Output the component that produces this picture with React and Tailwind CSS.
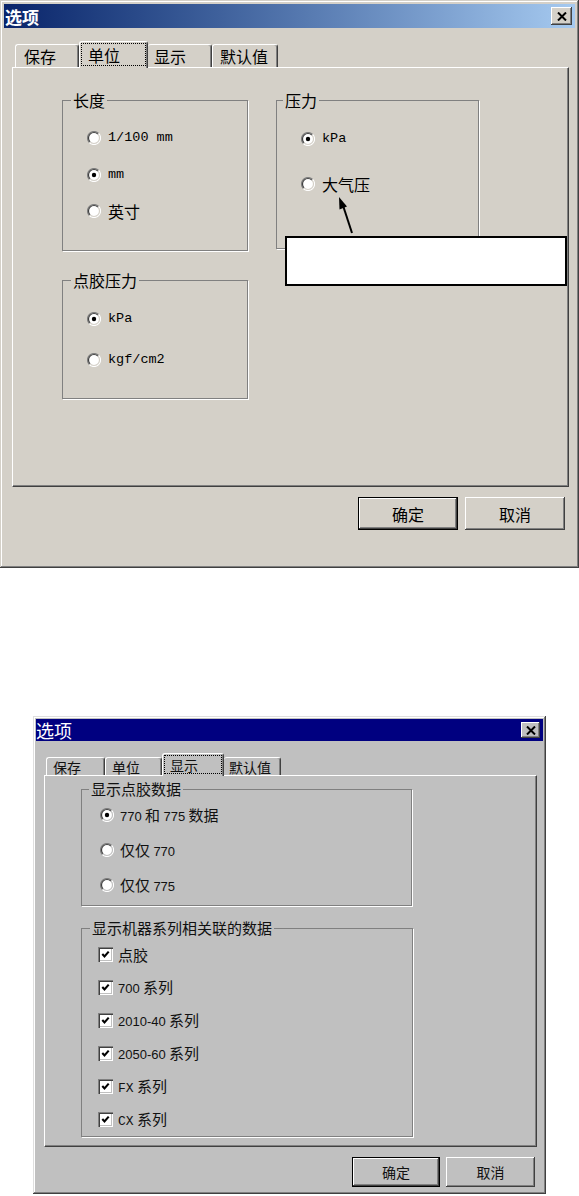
import React from 'react';

// Classic Windows option dialogs: "单位" tab (Win2000 look) and "显示" tab (Win95 look)

function Radio({ checked, face = '#d4d0c8' }) {
  return (
    <svg width="14" height="14" viewBox="0 0 14 14" className="shrink-0">
      <circle cx="7" cy="7" r="6" fill="#fff" />
      <path d="M2.4 11.6A6.5 6.5 0 0 1 11.6 2.4" fill="none" stroke="#808080" strokeWidth="1.2" />
      <path d="M11.6 2.4A6.5 6.5 0 0 1 2.4 11.6" fill="none" stroke="#fff" strokeWidth="1.2" />
      <path d="M3.1 10.9A5.5 5.5 0 0 1 10.9 3.1" fill="none" stroke="#404040" strokeWidth="1.2" />
      <path d="M10.9 3.1A5.5 5.5 0 0 1 3.1 10.9" fill="none" stroke={face} strokeWidth="1.2" />
      {checked && <circle cx="7" cy="7" r="2.2" fill="#000" />}
    </svg>
  );
}

function Checkbox() {
  return (
    <span className="flex items-center justify-center w-[15px] h-[15px] shrink-0 bg-white shadow-[inset_1px_1px_0_#808080,inset_2px_2px_0_#404040,inset_-1px_-1px_0_#fff,inset_-2px_-2px_0_#c0c0c0]">
      <svg width="9" height="9" viewBox="0 0 9 9">
        <path d="M1.3 4L3.5 6.4L7.7 1.6" stroke="#000" strokeWidth="2.1" fill="none" />
      </svg>
    </span>
  );
}

function CloseButton({ className }) {
  return (
    <div className={`flex items-center justify-center shadow-[inset_-1px_-1px_0_#404040,inset_1px_1px_0_#fff,inset_-2px_-2px_0_#808080] ${className}`}>
      <svg width="10" height="9" viewBox="0 0 10 9">
        <path d="M1 0.5L9 8.5M9 0.5L1 8.5" stroke="#000" strokeWidth="2" />
      </svg>
    </div>
  );
}

// etched group box; padding goes on the body so the legend stays put
function Group({ label, className, legendClass, bodyClass, children }) {
  return (
    <fieldset className={`border border-[#808080] shadow-[1px_1px_0_#fff] ${className}`}>
      <legend className={`px-[2px] ${legendClass}`}>{label}</legend>
      <div className={bodyClass}>{children}</div>
    </fieldset>
  );
}

const mono = "font-['Liberation_Mono','Noto_Sans_CJK_SC',monospace] text-[13.5px]";

function UnitsDialog() {
  return (
    <div className="relative w-[579px] h-[568px] p-[4px] bg-[#d4d0c8] text-black font-['Noto_Sans_CJK_SC',sans-serif] text-[16px] shadow-[inset_-1px_-1px_0_#404040,inset_1px_1px_0_#d4d0c8,inset_-2px_-2px_0_#808080,inset_2px_2px_0_#fff]">
      {/* title bar */}
      <div className="flex items-center justify-between h-[24px] pl-[1px] pr-[3px] bg-gradient-to-r from-[#0a246a] to-[#a6caf0]">
        <span className="text-white font-bold text-[17px] leading-none">选项</span>
        <CloseButton className="w-[21px] h-[18px] bg-[#d4d0c8]" />
      </div>

      {/* tabs */}
      <div className="flex items-end h-[26px] mt-[13px] ml-[8px] pl-[3px] leading-none">
        <div className="w-[64px] h-[23px] flex items-center pl-[8px] border-t border-l border-white border-r border-r-[#404040] rounded-t-[3px] shadow-[inset_-1px_0_0_#808080]">保存</div>
        <div className="relative z-10 -mb-px w-[69px] h-[27px] flex p-[1px] pb-[2px] bg-[#d4d0c8] border-t border-l border-white border-r border-r-[#404040] rounded-t-[3px] shadow-[inset_-1px_0_0_#808080]">
          <div className="flex-1 flex items-center pl-[6px] border border-dotted border-black">单位</div>
        </div>
        <div className="w-[64px] h-[23px] flex items-center pl-[6px] border-t border-white border-r border-r-[#404040] rounded-t-[3px] shadow-[inset_-1px_0_0_#808080]">显示</div>
        <div className="w-[66px] h-[23px] flex items-center pl-[7px] border-t border-l border-white border-r border-r-[#404040] rounded-t-[3px] shadow-[inset_-1px_0_0_#808080]">默认值</div>
      </div>

      {/* tab page */}
      <div className="ml-[8px] w-[557px] h-[420px] pl-[49px] pt-[23px] border-t border-l border-white border-r border-b border-r-[#404040] border-b-[#404040] shadow-[inset_-1px_-1px_0_#808080]">
        <div className="grid grid-cols-[186px_203px] gap-x-[28px] gap-y-[20px] items-start">
          <Group label="长度" className="h-[160px]" legendClass="ml-[8px] leading-[18px]" bodyClass="pl-[24px]">
            <div className="flex items-center gap-[7px] h-[20px] mt-[19px]">
              <Radio /><span className={mono}>1/100 mm</span>
            </div>
            <div className="flex items-center gap-[7px] h-[20px] mt-[17px]">
              <Radio checked /><span className={mono}>mm</span>
            </div>
            <div className="flex items-center gap-[7px] h-[20px] mt-[16px] leading-none">
              <Radio /><span>英寸</span>
            </div>
          </Group>

          <Group label="压力" className="h-[158px]" legendClass="ml-[6px] leading-[18px]" bodyClass="pl-[24px]">
            <div className="flex items-center gap-[7px] h-[20px] mt-[20px]">
              <Radio checked /><span className={mono}>kPa</span>
            </div>
            <div className="flex items-center gap-[7px] h-[20px] mt-[25px] leading-none">
              <Radio /><span>大气压</span>
            </div>
          </Group>

          <Group label="点胶压力" className="h-[128px]" legendClass="ml-[8px] leading-[18px]" bodyClass="pl-[24px]">
            <div className="flex items-center gap-[7px] h-[20px] mt-[20px]">
              <Radio checked /><span className={mono}>kPa</span>
            </div>
            <div className="flex items-center gap-[7px] h-[20px] mt-[21px]">
              <Radio /><span className={mono}>kgf/cm2</span>
            </div>
          </Group>
        </div>
      </div>

      {/* buttons */}
      <div className="flex justify-end gap-[7px] ml-[8px] w-[557px] pr-[4px] mt-[10px] leading-none">
        <button className="w-[100px] h-[33px] border border-black bg-[#d4d0c8] shadow-[inset_-1px_-1px_0_#404040,inset_1px_1px_0_#fff,inset_-2px_-2px_0_#808080]">确定</button>
        <button className="w-[100px] h-[33px] bg-[#d4d0c8] shadow-[inset_-1px_-1px_0_#404040,inset_1px_1px_0_#fff,inset_-2px_-2px_0_#808080]">取消</button>
      </div>

      {/* callout laid over the page */}
      <div className="absolute left-[285px] top-[236px] w-[282px] h-[50px] bg-white border-2 border-black" />
      <svg className="absolute left-0 top-0 pointer-events-none" width="579" height="568">
        <line x1="352" y1="233" x2="343.5" y2="207" stroke="#000" strokeWidth="2" />
        <polygon points="339,197 347,206.5 339.5,209.5" fill="#000" />
      </svg>
    </div>
  );
}

const sans = "font-['Liberation_Sans','Noto_Sans_CJK_SC',sans-serif] text-[13px]";
const serifMono = "font-['Liberation_Mono','Noto_Sans_CJK_SC',monospace] text-[13px]";

function DisplayDialog() {
  const series = [
    [null, '点胶'],
    [['700', sans], '系列'],
    [['2010-40', sans], '系列'],
    [['2050-60', sans], '系列'],
    [['FX', serifMono], '系列'],
    [['CX', serifMono], '系列'],
  ];
  return (
    <div className="w-[513px] h-[478px] ml-[33px] mt-[148px] p-[3px] bg-[#c0c0c0] text-[#111] font-['Noto_Sans_CJK_SC',sans-serif] text-[15px] shadow-[inset_-1px_-1px_0_#404040,inset_1px_1px_0_#dfdfdf,inset_-2px_-2px_0_#808080,inset_2px_2px_0_#fff]">
      {/* title bar */}
      <div className="flex items-center justify-between h-[22px] pr-[3px] bg-[#000080]">
        <span className="text-white text-[18px] leading-none">选项</span>
        <CloseButton className="w-[19px] h-[16px] bg-[#c0c0c0]" />
      </div>

      {/* tabs */}
      <div className="flex items-end h-[22px] mt-[12px] ml-[8px] pl-[2px] text-[14px] leading-none">
        <div className="w-[59px] h-[18px] flex items-center pl-[6px] border-t border-l border-white border-r border-r-[#404040] rounded-t-[3px] shadow-[inset_-1px_0_0_#808080]">保存</div>
        <div className="w-[57px] h-[18px] flex items-center pl-[6px] border-t border-l border-white border-r border-r-[#404040] rounded-t-[3px] shadow-[inset_-1px_0_0_#808080]">单位</div>
        <div className="relative z-10 -mb-px w-[62px] h-[23px] flex p-[1px] pb-[2px] bg-[#c0c0c0] border-t border-l border-white border-r border-r-[#404040] rounded-t-[3px] shadow-[inset_-1px_0_0_#808080]">
          <div className="flex-1 flex items-center pl-[5px] border border-dotted border-black">显示</div>
        </div>
        <div className="w-[57px] h-[18px] flex items-center pl-[5px] border-t border-white border-r border-r-[#404040] rounded-t-[3px] shadow-[inset_-1px_0_0_#808080]">默认值</div>
      </div>

      {/* tab page */}
      <div className="ml-[8px] w-[493px] h-[372px] pl-[36px] pt-[4px] border-t border-l border-white border-r border-b border-r-[#404040] border-b-[#404040] shadow-[inset_-1px_-1px_0_#808080]">
        <Group label="显示点胶数据" className="w-[331px] h-[126px]" legendClass="ml-[7px] leading-[18px]" bodyClass="pl-[18px]">
          <div className="flex items-center gap-[6px] h-[18px] mt-[8px] leading-none">
            <Radio checked face="#c0c0c0" />
            <span><span className={sans}>770</span> 和 <span className={sans}>775</span> 数据</span>
          </div>
          <div className="flex items-center gap-[6px] h-[18px] mt-[17px] leading-none">
            <Radio face="#c0c0c0" />
            <span>仅仅 <span className={sans}>770</span></span>
          </div>
          <div className="flex items-center gap-[6px] h-[18px] mt-[17px] leading-none">
            <Radio face="#c0c0c0" />
            <span>仅仅 <span className={sans}>775</span></span>
          </div>
        </Group>

        <Group label="显示机器系列相关联的数据" className="w-[332px] h-[218px] mt-[13px]" legendClass="ml-[8px] leading-[18px]" bodyClass="pl-[16px]">
          <div className="flex flex-col gap-[15px] pt-[8px]">
            {series.map(([latin, cjk], i) => (
              <div key={i} className="flex items-center gap-[5px] h-[18px] leading-none">
                <Checkbox />
                <span>
                  {latin && <span className={latin[1]}>{latin[0]}</span>}
                  {latin && ' '}
                  {cjk}
                </span>
              </div>
            ))}
          </div>
        </Group>
      </div>

      {/* buttons */}
      <div className="flex justify-end gap-[6px] ml-[8px] w-[493px] pr-[2px] mt-[10px] text-[14px] leading-none">
        <button className="w-[88px] h-[30px] border border-black bg-[#c0c0c0] shadow-[inset_-1px_-1px_0_#404040,inset_1px_1px_0_#fff,inset_-2px_-2px_0_#808080]">确定</button>
        <button className="w-[89px] h-[30px] bg-[#c0c0c0] shadow-[inset_-1px_-1px_0_#404040,inset_1px_1px_0_#fff,inset_-2px_-2px_0_#808080]">取消</button>
      </div>
    </div>
  );
}

export default function App() {
  return (
    <div className="w-[579px] min-h-[1196px] bg-white">
      <UnitsDialog />
      <DisplayDialog />
    </div>
  );
}
